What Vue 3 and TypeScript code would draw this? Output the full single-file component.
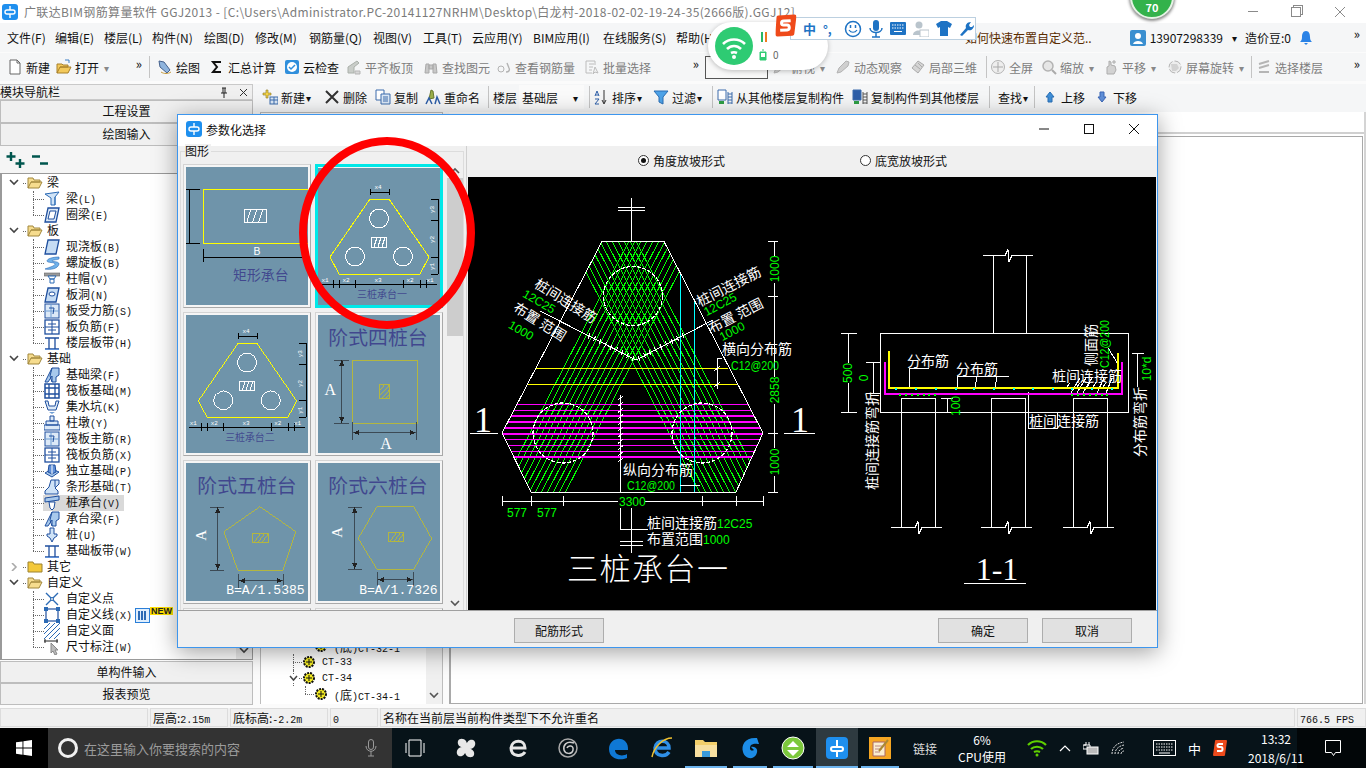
<template>
  <div class="app">
    <svg class="defs" width="0" height="0" aria-hidden="true">
      <symbol id="doc" viewBox="0 0 16 16"><path d="M3 1h7l3 3v11H3z" fill="#fff" stroke="#666" /><path d="M10 1v3h3" fill="none" stroke="#666" /></symbol>
      <symbol id="open" viewBox="0 0 16 16"><path d="M1 14V5h5l1 1h5v2H4l-3 6h11l3-6H4" fill="#f3c95b" stroke="#a8802a" /><path d="M9 1l4 0 0 3" fill="none" stroke="#3c7fc4" /></symbol>
      <symbol id="draw" viewBox="0 0 16 16"><path d="M2 2l5 1 6 8-3 3-7-6z" fill="#8fb4dd" stroke="#44608c" /><path d="M4 13c3 2 7 2 10 0" fill="none" stroke="#c59a3c" /></symbol>
      <symbol id="sigma" viewBox="0 0 16 16"><path d="M12 3H4l4 5-4 5h8" fill="none" stroke="#111" stroke-width="2" /></symbol>
      <symbol id="cloud" viewBox="0 0 16 16"><rect x="1" y="1" width="14" height="14" rx="2" fill="#2f8fdc" /><circle cx="8" cy="8" r="5" fill="#fff" /><path d="M5 8l2 2 4-4" fill="none" stroke="#2f8fdc" stroke-width="1.5" /></symbol>
      <symbol id="align" viewBox="0 0 16 16"><path d="M2 14V8l9-6 2 2-5 4v6z" fill="#c9cdc9" stroke="#aab0aa" /><path d="M9 12h5v3H9z" fill="#d8d8d8" stroke="#b5b5b5" /></symbol>
      <symbol id="binoc" viewBox="0 0 16 16"><path d="M2 14l1-9h3v9zM10 14V5h3l1 9zM6 6h4v4H6z" fill="#c8c8c8" stroke="#a9a9a9" /></symbol>
      <symbol id="eye" viewBox="0 0 16 16"><circle cx="5" cy="10" r="3" fill="none" stroke="#b3b3b3" /><path d="M10 13c3 0 4-2 3-4M11 4l2 5" fill="none" stroke="#b3b3b3" stroke-width="1.4" /></symbol>
      <symbol id="batch" viewBox="0 0 16 16"><path d="M2 2h9v4M2 2v12h6M5 5h5M5 8h4M5 11h3M11 8l3 6-3-1-2 2z" fill="none" stroke="#bcbcbc" /></symbol>
      <symbol id="orbit" viewBox="0 0 16 16"><path d="M2 14l2-5 7-7 3 1-1 4-7 6z" fill="#cfcfcf" stroke="#b3b3b3" /></symbol>
      <symbol id="box3d" viewBox="0 0 16 16"><path d="M2 9l6-7 6 4-6 8z" fill="#d5d5d5" stroke="#ababab" /><path d="M5 6l5 4M8 4l4 4" stroke="#ababab" /></symbol>
      <symbol id="fit" viewBox="0 0 16 16"><circle cx="8" cy="8" r="6.5" fill="#eee" stroke="#b3b3b3" /><path d="M8 3v10M3 8h10" stroke="#a9a9a9" /></symbol>
      <symbol id="zoom" viewBox="0 0 16 16"><circle cx="7" cy="7" r="5" fill="#e6e6e6" stroke="#b3b3b3" stroke-width="1.5" /><path d="M11 11l4 4" stroke="#aaa" stroke-width="2" /></symbol>
      <symbol id="pan" viewBox="0 0 16 16"><path d="M4 15V8l2-1V2l2 1v3l4 1 1 4-2 4z" fill="#d2d2d2" stroke="#adadad" /><path d="M11 1v4M9 3h4" stroke="#aaa" /></symbol>
      <symbol id="rotate" viewBox="0 0 16 16"><circle cx="8" cy="8" r="6" fill="#ededed" stroke="#b5b5b5" stroke-dasharray="7 2" /><path d="M4 5h6l2 4-3 3H5z" fill="#d2d2d2" /></symbol>
      <symbol id="floor" viewBox="0 0 16 16"><path d="M3 5l10-3M3 9l10-3M3 13h10" stroke="#b5b5b5" stroke-width="2" /></symbol>
      <symbol id="new" viewBox="0 0 16 16"><path d="M1 4h3V1h2v3h3v2H6v3H4V6H1z" fill="#f3d34a" stroke="#8a7520" stroke-width=".6" /><rect x="8" y="8" width="8" height="7" fill="#dce9f7" stroke="#3d6cad" /><path d="M8 11h8M12 8v7" stroke="#3d6cad" /></symbol>
      <symbol id="del" viewBox="0 0 16 16"><path d="M2 2l12 12M14 2L2 14" stroke="#333" stroke-width="2" /></symbol>
      <symbol id="copy" viewBox="0 0 16 16"><path d="M1 1h8v10H1z" fill="#fff" stroke="#3d6cad" /><path d="M6 5h9v10H6z" fill="#dce9f7" stroke="#3d6cad" /><path d="M8 8h5M8 10h5M8 12h5" stroke="#3d6cad" /></symbol>
      <symbol id="rename" viewBox="0 0 16 16"><path d="M6 1l2 1 1 7-5 1z" fill="#9bb04a" stroke="#6a7a30" /><path d="M1 15l3-6 3 6M10 15l2-7 3 7" fill="none" stroke="#2d5ea8" stroke-width="1.5" /></symbol>
      <symbol id="sort" viewBox="0 0 16 16"><path d="M11 1v13M9 11l2 4 2-4" fill="none" stroke="#333" /><path d="M2 7l2-5 2 5M2.5 6h3M2 10h4l-4 5h4" fill="none" stroke="#2d5ea8" /></symbol>
      <symbol id="filter" viewBox="0 0 16 16"><path d="M1 2h14L10 8v7l-4-2V8z" fill="#4ea3e8" stroke="#2a6fb5" /></symbol>
      <symbol id="cfrom" viewBox="0 0 16 16"><path d="M1 1h8v10H1z" fill="#fff" stroke="#3d6cad" /><path d="M2 12h5v3H2z" fill="#2e9e45" /><path d="M11 3v12M15 3v12M11 5h4M11 8h4M11 11h4M11 14h4" stroke="#3d6cad" /></symbol>
      <symbol id="cto" viewBox="0 0 16 16"><path d="M1 1h8v10H1z" fill="#2d5ea8" stroke="#3d6cad" /><path d="M2 12h5v3H2z" fill="#2e9e45" /><path d="M11 3v12M15 3v12M11 5h4M11 8h4M11 11h4M11 14h4" stroke="#555" /></symbol>
      <symbol id="up" viewBox="0 0 16 16"><path d="M8 3l4 5h-2v5H6V8H4z" fill="#3f8fd8" stroke="#2a6fb5" /></symbol>
      <symbol id="down" viewBox="0 0 16 16"><path d="M8 13l4-5h-2V3H6v5H4z" fill="#5f8fd8" stroke="#3a66b5" /></symbol>
      <symbol id="phone" viewBox="0 0 16 16"><rect width="16" height="16" rx="2" fill="#3a8fd0" /><circle cx="8" cy="6" r="3" fill="#fff" /><path d="M3 14c1-4 9-4 10 0z" fill="#fff" /></symbol>
      <symbol id="bell" viewBox="0 0 16 16"><path d="M8 1c3 0 4 3 4 6s1 4 2 5H2c1-1 2-2 2-5s1-6 4-6zM6 13h4l-2 2z" fill="#2a82e6" /></symbol>
      <symbol id="folderOpen" viewBox="0 0 16 16"><path d="M1 13V3h5l1 2h6v2H4l-3 6h11l3-6H4" fill="#f6dc8e" stroke="#a1873d" /></symbol>
      <symbol id="folderShut" viewBox="0 0 16 16"><path d="M1 13V3h5l1 2h8v8z" fill="#f3c83a" stroke="#9c8230" /></symbol>
      <symbol id="beam" viewBox="0 0 16 16"><path d="M1 3l14-2-4 5v8H7V7z" fill="#cfe3f7" stroke="#2b6ab5" /><path d="M11 6v8" stroke="#2b6ab5" /></symbol>
      <symbol id="ring" viewBox="0 0 16 16"><path d="M4 1h11l-3 14H1z" fill="#dce9f7" stroke="#1f4f9e" stroke-width="1.3" /><path d="M6 4h6l-2 8H4z" fill="#fff" stroke="#1f4f9e" /></symbol>
      <symbol id="slab" viewBox="0 0 16 16"><path d="M4 1h11l-3 14H1z" fill="#c5dcf4" stroke="#1f4f9e" stroke-width="1.3" /></symbol>
      <symbol id="spiral" viewBox="0 0 16 16"><path d="M15 2C8 2 3 4 3 6s8 1 8 3-5 3-10 5c5 1 13 0 14-5 0-3-7-2-7-3s4-1 7-2z" fill="#6fb1ea" stroke="#2b6ab5" stroke-width=".6" /></symbol>
      <symbol id="cap" viewBox="0 0 16 16"><path d="M0 2h16v3H0z" fill="#9a9a9a" stroke="#666" stroke-width=".6" /><path d="M4 5h8l-2 3H6zM6 8h4v4H6z" fill="#fff" stroke="#2b6ab5" /></symbol>
      <symbol id="hole" viewBox="0 0 16 16"><path d="M4 1h11l-3 14H1z" fill="#c5dcf4" stroke="#1f4f9e" stroke-width="1.3" /><ellipse cx="8" cy="7" rx="3" ry="2" fill="#fff" stroke="#1f4f9e" /></symbol>
      <symbol id="bar" viewBox="0 0 16 16"><rect x="1" y="1" width="14" height="14" fill="#dce9f7" stroke="#1f4f9e" /><path d="M1 8h14M7 1v14" stroke="#6f9ed4" /><path d="M5 5h5l-1 6" fill="none" stroke="#1f4f9e" /></symbol>
      <symbol id="grid" viewBox="0 0 16 16"><rect x="1" y="1" width="14" height="14" fill="#fff" stroke="#1f4f9e" stroke-width="1.3" /><path d="M1 8h14M8 1v14M4 5h8M4 11h8" stroke="#1f4f9e" /></symbol>
      <symbol id="band" viewBox="0 0 16 16"><path d="M1 3h14M1 14h14M5 3v11M11 3v11" stroke="#1f4f9e" stroke-width="1.3" /><path d="M1 14h14v1H1z" fill="#5f8fd8" /></symbol>
      <symbol id="fbeam" viewBox="0 0 16 16"><path d="M1 15l3-6 4-8h7v7l-3 2v5H8V9l-4 6z" fill="#a8c9ec" stroke="#1f4f9e" /><path d="M8 1l-2 8 2 6" fill="none" stroke="#1f4f9e" /></symbol>
      <symbol id="raft" viewBox="0 0 16 16"><rect x="1" y="1" width="14" height="14" fill="#fff" stroke="#1f4f9e" stroke-width="1.5" /><path d="M5 1v14M11 1v14M1 5h14M1 11h14" stroke="#1f4f9e" stroke-width="1.3" /></symbol>
      <symbol id="pit" viewBox="0 0 16 16"><path d="M1 2h3l1 5h6l1-5h3l-3 9H4z" fill="#dce9f7" stroke="#1f4f9e" /><path d="M5 13h6l-3 2z" fill="#6f9ed4" /></symbol>
      <symbol id="pier" viewBox="0 0 16 16"><path d="M6 1h4v5H6zM2 6h12v4H2zM0 10h16v5H0z" fill="#dce9f7" stroke="#1f4f9e" /></symbol>
      <symbol id="iso" viewBox="0 0 16 16"><path d="M1 10l7-4 7 3-7 5z" fill="#a8c9ec" stroke="#1f4f9e" /><path d="M5 2h6l1 7-4 2-4-2z" fill="#5f8fd8" stroke="#1f4f9e" /><path d="M8 2v9" stroke="#fff" /></symbol>
      <symbol id="foot" viewBox="0 0 16 16"><path d="M7 1h8v4l-4 4 3 3v3H1v-3l4-4z" fill="#cfe3f7" stroke="#1f4f9e" /><path d="M11 1v7" stroke="#1f4f9e" /></symbol>
      <symbol id="pcap" viewBox="0 0 16 16"><path d="M1 3l14-2v4L1 7z" fill="#a8c9ec" stroke="#1f4f9e" /><path d="M5 7h6l-1 6-2 2-2-2z" fill="#fff" stroke="#1f4f9e" /></symbol>
      <symbol id="pile" viewBox="0 0 16 16"><path d="M6 1h4v6h3v2l-3 2-2 4-2-4-3-2V7h3z" fill="#cfe3f7" stroke="#1f4f9e" /></symbol>
      <symbol id="point" viewBox="0 0 16 16"><path d="M2 2l12 12M14 2L2 14" stroke="#2b6ab5" stroke-width="1.4" /><circle cx="8" cy="8" r="1.5" fill="#f5f5f5" stroke="#2b6ab5" /></symbol>
      <symbol id="line" viewBox="0 0 16 16"><rect x="2" y="2" width="12" height="12" fill="#fff" stroke="#1f4f9e" stroke-width="1.2" /><path d="M0 0h4v4H0zM12 0h4v4h-4zM0 12h4v4H0zM12 12h4v4h-4z" fill="#2b6ab5" /></symbol>
      <symbol id="area" viewBox="0 0 16 16"><path d="M0 6l6-6M0 11L11 0M0 16L16 0M5 16L16 5M10 16l6-6" stroke="#2b6ab5" /></symbol>
      <symbol id="dim" viewBox="0 0 16 16"><path d="M0 2h14M1 0v4M13 0v4" stroke="#222" /><path d="M7 4l7 7-3 0 2 4-2 1-2-4-2 2z" fill="#bbb" stroke="#888" /></symbol>
      <symbol id="gear" viewBox="0 0 14 14"><circle cx="7" cy="7" r="5" fill="#f4ec22" stroke="#111" stroke-dasharray="2 1" stroke-width="2" /><path d="M4 7h6M7 4v6" stroke="#111" /></symbol>
    </svg>

    <header class="titlebar">
      <svg class="app-ico" viewBox="0 0 16 16"><rect width="16" height="16" rx="3" fill="#1e8fee" /><path d="M8 2v4H5a2 2 0 0 0 0 4h3v4M8 6h3a2 2 0 0 1 0 4H8" fill="none" stroke="#fff" stroke-width="1.4" /></svg>
      <span class="title-text">广联达BIM钢筋算量软件 GGJ2013 - [C:\Users\Administrator.PC-20141127NRHM\Desktop\白龙村-2018-02-02-19-24-35(2666版).GGJ12]</span>
      <div class="win-btns">
        <i class="min" /><i class="max" /><svg width="12" height="12" viewBox="0 0 12 12"><path d="M1 1l10 10M11 1L1 11" stroke="#8a8a8a" /></svg>
      </div>
    </header>

    <nav class="menubar">
      <span v-for="m in menu" :key="m.t" class="menu-item" :style="{ width: m.w + 'px' }">{{ m.t }}</span>
      <span class="link-text">如何快速布置自定义范..</span>
      <svg class="ico phone"><use href="#phone" /></svg>
      <span class="phone-no">13907298339</span>
      <span class="caret">▾</span>
      <span class="beans">造价豆:0</span>
      <svg class="ico bell"><use href="#bell" /></svg>
      <span class="more">»</span>
    </nav>

    <div class="toolbar top">
      <template v-for="it in topBar" :key="it.x">
        <div class="tool" :class="{ gray: it.gray }" :style="{ width: it.w + 'px' }">
          <svg v-if="it.icon" class="ico"><use :href="'#' + it.icon" /></svg>
          <span v-if="it.t" class="tool-label">{{ it.t }}</span>
          <span v-if="it.caret" class="tool-caret">▾</span>
          <span v-if="it.more" class="more">»</span>
          <span v-if="it.sep" class="sep" />
          <span v-if="it.box" class="view-box" />
        </div>
      </template>
    </div>

    <div class="workspace">
      <aside class="nav-panel">
        <div class="nav-head">
          <span>模块导航栏</span>
          <span class="head-icons">
            <svg width="10" height="11" viewBox="0 0 10 11"><path d="M3 1h4M4 1v5M6 1v5M2 6h6M5 6v5" stroke="#222" fill="none" /></svg>
            <svg width="9" height="9" viewBox="0 0 9 9"><path d="M1 1l7 7M8 1L1 8" stroke="#333" /></svg>
          </span>
        </div>
        <div class="nav-btn tall">工程设置</div>
        <div class="nav-btn tall">绘图输入</div>
        <div class="expand-bar">
          <svg width="20" height="20" viewBox="0 0 20 20"><path d="M5 2v9M0.500 6.500h9M14 9v9M9.500 13.500h9" stroke="#00564e" stroke-width="2.400" /></svg>
          <svg width="18" height="20" viewBox="0 0 18 20"><path d="M0 6.500h8M8 13.500h8" stroke="#00564e" stroke-width="2.400" /></svg>
        </div>
        <div class="tree">
          <div
            v-for="n in tree"
            :key="n.label + n.key"
            class="tree-row"
            :class="[n.icon ? 'leaf' : 'root', { end: n.end, picked: n.picked }]"
          >
            <template v-if="!n.icon">
              <svg class="chev" width="10" height="8" viewBox="0 0 10 8">
                <path :d="n.shut ? 'M3 0l4 4-4 4' : 'M1 1l4 4 4-4'" fill="none" :stroke="n.shut ? '#aaa' : '#444'" stroke-width="1.6" />
              </svg>
              <i class="dots" />
              <svg class="ico"><use :href="n.shut ? '#folderShut' : '#folderOpen'" /></svg>
            </template>
            <template v-else>
              <i class="dots long" />
              <svg class="ico"><use :href="'#' + n.icon" /></svg>
            </template>
            <span class="tree-label">{{ n.label }}<span class="mono">{{ n.key }}</span></span>
            <template v-if="n.isNew">
              <svg class="new-ico" viewBox="0 0 15 15"><rect x=".5" y=".5" width="14" height="14" fill="#dfeefd" stroke="#2b7fd8" /><path d="M4 3v9M7 3v9M10 3v9" stroke="#2b6ab5" stroke-width="2" /></svg>
              <span class="new-badge">NEW</span>
            </template>
          </div>
          <div class="tree-scroll">
            <svg width="10" height="7" viewBox="0 0 10 7"><path d="M1 1l4 4 4-4" fill="none" stroke="#444" stroke-width="1.6" /></svg>
          </div>
        </div>
        <div class="nav-btn">单构件输入</div>
        <div class="nav-btn">报表预览</div>
      </aside>

      <section class="work-right">
        <div class="toolbar second">
          <div v-for="it in secondBar" :key="it.x" class="tool" :class="{ 'combo-wrap': it.combo }" :style="{ width: it.w + 'px' }">
            <svg v-if="it.icon" class="ico"><use :href="'#' + it.icon" /></svg>
            <span v-if="it.t" class="tool-label" :class="{ combo: it.combo }">{{ it.t }}</span>
            <span v-if="it.caret" class="tool-caret dark">▾</span>
            <span v-if="it.sep" class="sep" />
          </div>
        </div>
        <div class="work-body">
          <div class="list-pane">
            <div v-for="r in listRows" :key="r.t" class="list-row" :class="{ child: r.child }">
              <svg v-if="r.chev" class="list-chev" width="9" height="7" viewBox="0 0 9 7"><path d="M1 1l3.500 4 3.500-4" fill="none" stroke="#444" stroke-width="1.5" /></svg>
              <i class="dots" />
              <svg class="gear"><use href="#gear" /></svg>
              <span class="mono-name"><template v-if="r.child">(<span class="cn">底</span>)</template>{{ r.t }}</span>
            </div>
            <div class="list-scroll">
              <svg width="10" height="7" viewBox="0 0 10 7"><path d="M1 1l4 4 4-4" fill="none" stroke="#555" stroke-width="1.6" /></svg>
            </div>
          </div>
          <div class="props-pane">
            <div class="props-head" />
            <div class="canvas-frame" />
          </div>
        </div>
      </section>
    </div>

    <footer class="statusbar">
      <span class="cell c0" />
      <span class="cell c1">层高:<b>2.15m</b></span>
      <span class="cell c2">底标高:<b>-2.2m</b></span>
      <span class="cell c3"><b>0</b></span>
      <span class="cell c4">名称在当前层当前构件类型下不允许重名</span>
      <span class="cell c5"><b>766.5 FPS</b></span>
    </footer>

    <footer class="taskbar">
      <div class="start">
        <svg width="16" height="16" viewBox="0 0 16 16"><path d="M0 2.300l6.500-.9v6.200H0zM7.400 1.300L16 0v7.600H7.400zM0 8.500h6.500v6.200L0 13.800zM7.400 8.500H16V16l-8.600-1.200z" fill="#fff" /></svg>
      </div>
      <div class="search">
        <i class="cortana" />
        <span>在这里输入你要搜索的内容</span>
        <svg class="mic" width="12" height="18" viewBox="0 0 12 18"><rect x="3.500" y=".5" width="5" height="10" rx="2.500" fill="none" stroke="#9a9a9a" /><path d="M1 7c0 7 10 7 10 0M6 12v5M3 17h6" fill="none" stroke="#9a9a9a" /></svg>
      </div>
      <div class="task-icons">
        <div v-for="b in taskButtons" :key="b.id" class="task-btn" :class="{ active: b.active, running: b.running }" :style="{ width: b.w + 'px' }">
          <svg width="26" height="26" viewBox="0 0 26 26" v-html="b.svg" />
        </div>
      </div>
      <span class="tray-link">链接</span>
      <div class="cpu"><span>6%</span><span>CPU使用</span></div>
      <div class="tray">
        <svg width="20" height="18" viewBox="0 0 20 18"><path d="M1 6c5-5 13-5 18 0M4 10c3-3 9-3 12 0M7 13c2-1 4-1 6 0" fill="none" stroke="#5fd000" stroke-width="2.200" /><circle cx="10" cy="16" r="1.500" fill="#5fd000" /></svg>
        <svg width="12" height="8" viewBox="0 0 12 8"><path d="M1 7l5-5 5 5" fill="none" stroke="#fff" stroke-width="1.200" /></svg>
        <svg width="16" height="14" viewBox="0 0 16 14"><path d="M1 4h2V1M6 4V1M0 4h7v4H0z" fill="none" stroke="#fff" /><rect x="4" y="6" width="11" height="7" fill="#bbb" stroke="#fff" /></svg>
        <svg width="14" height="14" viewBox="0 0 14 14"><path d="M1 13C1 6 6 2 13 1M4 13c0-5 4-8 9-9M7 13c0-3 2-5 6-6M10 13c0-1 1-3 3-3" fill="none" stroke="#ddd" stroke-dasharray="2 1" /></svg>
        <svg class="kbd" width="23" height="16" viewBox="0 0 23 16"><rect x=".5" y=".5" width="22" height="15" fill="none" stroke="#fff" /><path d="M3 4h17M3 7h17M3 10h17" stroke="#fff" stroke-dasharray="1.500 1" /><path d="M6 13h11" stroke="#fff" /></svg>
        <span class="tray-ime">中</span>
        <svg width="14" height="18" viewBox="0 0 14 18"><path d="M3 1h10q1 0 1 1l-2 14q0 1-1 1H1q-1 0-1-1L2 2q0-1 1-1z" fill="#ee4b1c" /><path d="M10 5H6C4 5 4 8 6 8h2c2 0 2 4 0 4H4" fill="none" stroke="#fff" stroke-width="2" /></svg>
      </div>
      <div class="clock"><span>13:32</span><span>2018/6/11</span></div>
      <div class="notify">
        <svg width="16" height="17" viewBox="0 0 16 17"><path d="M.5.5h15v12h-5l-2 3-2-3H.5z" fill="none" stroke="#fff" /></svg>
      </div>
    </footer>

    <!-- dialog floats above the main window -->
    <div class="dialog">
      <div class="dlg-title">
        <svg class="app-ico" viewBox="0 0 16 16"><rect width="16" height="16" rx="3" fill="#1e8fee" /><path d="M8 2v4H5a2 2 0 0 0 0 4h3v4M8 6h3a2 2 0 0 1 0 4H8" fill="none" stroke="#fff" stroke-width="1.400" /></svg>
        <span class="dlg-name">参数化选择</span>
        <div class="dlg-controls">
          <svg width="12" height="12" viewBox="0 0 12 12"><path d="M1 6h10" stroke="#111" /></svg>
          <svg width="12" height="12" viewBox="0 0 12 12"><rect x="1.500" y="1.500" width="9" height="9" fill="none" stroke="#111" /></svg>
          <svg width="12" height="12" viewBox="0 0 12 12"><path d="M1 1l10 10M11 1L1 11" stroke="#111" /></svg>
        </div>
      </div>
      <div class="dlg-body">
        <div class="shapes">
          <span class="shapes-legend">图形</span>
          <div class="thumb-grid">
            <div class="cell-thumb">
              <svg viewBox="186 167 122 139" class="thumb">
                <rect x="186" y="167" width="122" height="139" fill="#6f94aa" />
                <path d="M308 189.500H203.500v55H308" fill="none" stroke="#ffff00" />
                <path d="M186 189.500h14M186 244.500h14M189.500 189v55M203.500 250v13M203 258.500h105" fill="none" stroke="#000" />
                <rect x="244.500" y="209.500" width="22" height="13" fill="none" stroke="#fff" />
                <path d="M247 222l4-13M253 222l4-13M259 222l4-13" stroke="#fff" />
                <text x="257" y="256" class="t-white t-11" text-anchor="middle">B</text>
                <text x="233" y="281" class="t-navy t-14">矩形承台</text>
              </svg>
            </div>
            <div class="cell-thumb selected">
              <svg viewBox="318 168 122 137" class="thumb">
                <rect x="318" y="168" width="122" height="137" fill="#6f94aa" />
                <g v-html="pileThree" />
                <text x="357" y="298" class="t-navy t-10">三桩承台一</text>
              </svg>
            </div>
            <div class="cell-thumb">
              <svg viewBox="318 171 122 139" class="thumb">
                <rect x="318" y="171" width="122" height="139" fill="#6f94aa" />
                <g v-html="pileThree" />
                <text x="357" y="298" class="t-navy t-10">三桩承台二</text>
              </svg>
            </div>
            <div class="cell-thumb">
              <svg viewBox="318 315 122 139" class="thumb">
                <rect x="318" y="315" width="122" height="139" fill="#6f94aa" />
                <text x="328" y="345" class="t-navy t-20">阶式四桩台</text>
                <rect x="352.500" y="360.500" width="65" height="64" fill="none" stroke="#b3b63f" />
                <rect x="379.500" y="385.500" width="10" height="14" fill="none" stroke="#b3b63f" />
                <path d="M380 391l4-5M380 396l9-10M382 399l7-8M386 399l3-3" stroke="#b3b63f" />
                <path d="M334 360.500h15M334 424.500h15M341.500 360v64M352.500 423v18M416.500 423v18M353 433.500h63" fill="none" stroke="#3b4a55" />
                <path d="M341.500 360l-2.500 6h5zM341.500 424l-2.500-6h5zM353 433.500l6-2.500v5zM416 433.500l-6-2.500v5z" fill="#222" />
                <text x="330" y="396" class="t-white t-16 serif" text-anchor="middle">A</text>
                <text x="386" y="450" class="t-white t-16 serif" text-anchor="middle">A</text>
              </svg>
            </div>
            <div class="cell-thumb">
              <svg viewBox="186 463 122 139" class="thumb">
                <rect x="186" y="463" width="122" height="139" fill="#6f94aa" />
                <text x="197" y="493" class="t-navy t-20">阶式五桩台</text>
                <path d="M260 507l36 25-13 39h-45l-14-39z" fill="none" stroke="#b3b63f" />
                <rect x="252.500" y="534.500" width="16" height="9" fill="none" stroke="#b3b63f" />
                <path d="M254 543l6-8M258 543l6-8M262 543l6-8" stroke="#b3b63f" />
                <path d="M210 507.500h14M210 571.500h14M217.500 507v64M238.500 575v14M283.500 575v14M239 581.500h44" fill="none" stroke="#3b4a55" />
                <path d="M217.500 507l-2.500 6h5zM217.500 571l-2.500-6h5zM239 581.500l6-2.500v5zM283 581.500l-6-2.500v5z" fill="#222" />
                <text transform="translate(206 536) rotate(-90)" class="t-white t-15 serif" text-anchor="middle">A</text>
                <text x="226" y="595" class="t-white t-13 mono-font">B=A/1.5385</text>
              </svg>
            </div>
            <div class="cell-thumb">
              <svg viewBox="318 463 122 139" class="thumb">
                <rect x="318" y="463" width="122" height="139" fill="#6f94aa" />
                <text x="328" y="493" class="t-navy t-20">阶式六桩台</text>
                <path d="M377 507h37l18 32-18 31h-37l-19-31z" fill="none" stroke="#b3b63f" />
                <rect x="388.500" y="533.500" width="15" height="9" fill="none" stroke="#b3b63f" />
                <path d="M390 542l6-8M394 542l6-8M398 542l5-7" stroke="#b3b63f" />
                <path d="M348 507.500h14M348 570.500h14M354.500 507v63M377.500 573v14M413.500 573v14M378 580.500h35" fill="none" stroke="#3b4a55" />
                <path d="M354.500 507l-2.500 6h5zM354.500 570l-2.500-6h5zM378 580.500l6-2.500v5zM413 580.500l-6-2.500v5z" fill="#222" />
                <text transform="translate(342 533) rotate(-90)" class="t-white t-15 serif" text-anchor="middle">A</text>
                <text x="359" y="595" class="t-white t-13 mono-font">B=A/1.7326</text>
              </svg>
            </div>
            <div class="cell-thumb" />
            <div class="cell-thumb" />
          </div>
          <div class="vscroll">
            <svg width="10" height="7" viewBox="0 0 10 7"><path d="M1 6l4-4 4 4" fill="none" stroke="#555" stroke-width="1.600" /></svg>
            <i class="vthumb" />
            <svg class="vdown" width="10" height="7" viewBox="0 0 10 7"><path d="M1 1l4 4 4-4" fill="none" stroke="#555" stroke-width="1.600" /></svg>
          </div>
        </div>
        <div class="preview">
          <div class="radios">
            <label class="radio on">角度放坡形式</label>
            <label class="radio">底宽放坡形式</label>
          </div>
          <svg class="cad" viewBox="468 177 688 433">
            <rect x="468" y="177" width="688" height="433" fill="#000" />
            <clipPath id="hexClip"><path d="M602 241h62l99 192-27 59H531l-29-59z" /></clipPath>

            <!-- plan: rebar bands -->
            <g clip-path="url(#hexClip)" stroke="#00ff00" stroke-width="1">
              <line v-for="x in bandXs" :key="'a' + x" :x1="x" y1="241" :x2="x + 129.500" y2="492" />
              <line v-for="x in bandXs" :key="'b' + x" :x1="1265 - x" y1="241" :x2="1265 - x - 129.500" y2="492" />
            </g>
            <g clip-path="url(#hexClip)" stroke="#ff00ff" stroke-width="1.500">
              <line v-for="y in magentaYs" :key="y" x1="500" :y1="y" x2="766" :y2="y" />
            </g>
            <path d="M536 368.500h192M528 384.500h209" stroke="#ffff00" stroke-width="1.500" />
            <path d="M680.500 275v217M694.500 302v190" stroke="#00ffff" stroke-width="1.200" />
            <g fill="none" stroke="#fff">
              <path d="M602 241.500h62l99 191.500-27 59H531l-29-59z" />
              <circle cx="633" cy="296" r="29.500" stroke-dasharray="4 1.500" stroke-width="1.200" />
              <circle cx="563" cy="433" r="30" stroke-dasharray="4 1.500" stroke-width="1.200" />
              <circle cx="702" cy="433" r="30" stroke-dasharray="4 1.500" stroke-width="1.200" />
              <path d="M631.500 198v43M618 207.500h27M618 210.500h27" />
              <path d="M540 311l96 49 77-40" />
              <path v-for="t in vTicks" :key="t" :d="t" />
              <path d="M620.500 395v97" />
              <path v-for="y in vertTicks" :key="y" :d="`M618 ${y + 2}l5-4`" />
              <path d="M722 358.500h-5v30M714 371l6-5M714 387l6-5" />
              <path d="M680 485.500h20M620.500 508v21h27M631.500 508v45M620 541.500h23M620 545.500h23" />
              <!-- dimensions, the line stops around each number -->
              <path d="M774.500 241v15M774.500 283v94M774.500 404v44M774.500 476v16M768 241.500h10M768 296.500h10M768 433.500h10M768 492.500h10" />
              <path d="M502 501.500h116M645 501.500h118M502.500 496v10M531.500 496v10M563.500 496v10M702.500 496v10M736.500 496v10M763.500 496v10" />
              <path d="M470 433.500h28M784 433.500h31" />
            </g>
            <g class="cad-green">
              <text transform="translate(779 269) rotate(-90)" text-anchor="middle">1000</text>
              <text transform="translate(779 390) rotate(-90)" text-anchor="middle">2858</text>
              <text transform="translate(779 462) rotate(-90)" text-anchor="middle">1000</text>
              <text x="507" y="517">577</text>
              <text x="537" y="517">577</text>
              <text x="619" y="506">3300</text>
              <text x="731" y="370" class="wide" textLength="48" lengthAdjust="spacingAndGlyphs">C12@200</text>
              <text x="627" y="490" class="wide" textLength="48" lengthAdjust="spacingAndGlyphs">C12@200</text>
              <text x="717" y="528">12C25</text>
              <text x="703" y="544">1000</text>
              <text transform="translate(537 305) rotate(30)" text-anchor="middle">12C25</text>
              <text transform="translate(519 334) rotate(30)" text-anchor="middle">1000</text>
              <text transform="translate(722 308) rotate(-28)" text-anchor="middle">12C25</text>
              <text transform="translate(734 335) rotate(-28)" text-anchor="middle">1000</text>
            </g>
            <g class="cad-white">
              <text transform="translate(563 305) rotate(32)" text-anchor="middle">桩间连接筋</text>
              <text transform="translate(537 326) rotate(32)" text-anchor="middle">布置 范围</text>
              <text transform="translate(731 291) rotate(-27)" text-anchor="middle">桩间连接筋</text>
              <text transform="translate(738 320) rotate(-27)" text-anchor="middle">布置 范围</text>
              <text x="722" y="354">横向分布筋</text>
              <text x="623" y="475">纵向分布筋</text>
              <text x="647" y="528">桩间连接筋</text>
              <text x="647" y="544">布置范围</text>
            </g>
            <text x="483" y="432" class="cad-big serif" text-anchor="middle">1</text>
            <text x="800" y="432" class="cad-big serif" text-anchor="middle">1</text>
            <text x="567" y="580" class="cad-title">三桩承台一</text>

            <!-- section 1-1 -->
            <g fill="none" stroke="#fff">
              <path d="M993.500 255v78M1026.500 255v78M983 255.500h22l3-6 1 12 3-6h21" />
              <rect x="880.500" y="333.500" width="248" height="79" />
              <path d="M901.500 398v129M935.500 398v129M901 398.500h34M991.500 398v129M1025.500 398v129M991 398.500h34M1073.500 398v129M1107.500 398v129M1073 398.500h34" />
              <path d="M891 527.500h24l3-6 1 12 3-6h20M981 527.500h24l3-6 1 12 3-6h20M1063 527.500h24l3-6 1 12 3-6h20" />
              <path d="M848.500 333v30M848.500 383v30M841 333.500h16M841 412.500h16M873.500 362v32M866 362.500h14M866 393.500h14" />
              <path d="M947.500 398v15M941 398.500h12M941 412.500h12M1137.500 353v34M1132 353.500h12" />
              <path d="M909.500 388v-20h19M958 376.500h51M958 376l-1 12M977 376l-2 12M997 376l-2 12" />
              <path d="M1028.500 392v36h29v-15M1090 383l-4 5M1080 383l-4 5M1070 383l-4 5M1106 383l-4 5M1096 383l-4 5M1080 378l-9 15M1086 378l-9 15M1092 378l-9 15M1104 378l-7 15M1112 378l-6 15" />
              <path d="M1108 348l10 16" />
            </g>
            <path d="M889 351v37h229v-35" fill="none" stroke="#ffff00" stroke-width="2" />
            <path d="M885 362v32h237v-32" fill="none" stroke="#ff00ff" stroke-width="2" />
            <circle v-for="x in cyanDots" :key="x" :cx="x" cy="389" r="1.300" fill="#00ffff" />
            <circle v-for="x in greenDots" :key="x" :cx="x" cy="395" r="1.300" fill="#00ff00" />
            <g class="cad-green">
              <text transform="translate(852 373) rotate(-90)" text-anchor="middle">500</text>
              <text transform="translate(868 378) rotate(-90)" text-anchor="middle">0</text>
              <text transform="translate(960 406) rotate(-90)" text-anchor="middle">100</text>
              <text transform="translate(1151 369) rotate(-90)" text-anchor="middle">10*d</text>
              <text transform="translate(1109 344) rotate(-90)" class="wide" text-anchor="middle" textLength="48" lengthAdjust="spacingAndGlyphs">C12@200</text>
            </g>
            <g class="cad-white">
              <text x="907" y="366">分布筋</text>
              <text x="956" y="374">分布筋</text>
              <text x="1052" y="381">桩间连接筋</text>
              <text x="1029" y="426">桩间连接筋</text>
              <text transform="translate(877 441) rotate(-90)" text-anchor="middle">桩间连接筋弯折</text>
              <text transform="translate(1145 422) rotate(-90)" text-anchor="middle">分布筋弯折</text>
              <text transform="translate(1096 345) rotate(-90)" text-anchor="middle">侧面筋</text>
            </g>
            <text x="997" y="580" class="cad-big serif small" text-anchor="middle">1-1</text>
            <path d="M964 583.500h62" stroke="#fff" />
          </svg>
        </div>
      </div>
      <div class="dlg-foot">
        <button class="btn rebar">配筋形式</button>
        <button class="btn ok">确定</button>
        <button class="btn cancel">取消</button>
      </div>
    </div>

    <!-- red marker drawn by the user over the screenshot -->
    <svg class="marker" width="190" height="206" viewBox="0 0 190 206">
      <ellipse cx="95" cy="103" rx="84" ry="92" fill="none" stroke="#ff0000" stroke-width="8" />
    </svg>

    <div class="score"><span>70</span></div>

    <div class="net-widget">
      <svg width="38" height="38" viewBox="0 0 38 38"><circle cx="19" cy="19" r="19" fill="#2ecb73" /><path d="M8 17c6-6 16-6 22 0M12 22c4-4 10-4 14 0M16 26c2-1 4-1 6 0" fill="none" stroke="#fff" stroke-width="2.600" /><circle cx="19" cy="30" r="2" fill="#fff" /></svg>
      <div class="net-side">
        <svg width="10" height="12" viewBox="0 0 10 12"><path d="M3 1v10" stroke="#29b765" stroke-width="2" /><path d="M7 1v10" stroke="#f07a1e" stroke-width="2" /></svg>
        <div class="net-count">
          <svg width="8" height="12" viewBox="0 0 8 12"><path d="M1 3h6v8H1z" fill="#2ecb73" stroke="#2ecb73" /><path d="M3 1h2" stroke="#2ecb73" /><rect x="2" y="4" width="4" height="4" fill="#fff" /></svg>
          <span>0</span>
        </div>
      </div>
    </div>

    <div class="ime-bar">
      <span class="ime-zh">中</span>
      <span class="ime-dot">°,</span>
      <svg width="18" height="18" viewBox="0 0 18 18"><circle cx="9" cy="9" r="7.500" fill="none" stroke="#1e73c4" stroke-width="1.500" /><path d="M5 10c2 3 6 3 8 0" fill="none" stroke="#1e73c4" stroke-width="1.200" /><path d="M6.500 5v3M11.500 5v3" stroke="#1e73c4" stroke-width="1.500" /></svg>
      <svg width="14" height="18" viewBox="0 0 14 18"><rect x="4" y="0" width="6" height="11" rx="3" fill="#1e73c4" /><path d="M1 8c0 6 12 6 12 0M7 13v4M3 17h8" fill="none" stroke="#1e73c4" stroke-width="1.500" /></svg>
      <svg width="16" height="13" viewBox="0 0 16 13"><rect width="16" height="13" rx="1" fill="#1e73c4" /><path d="M2 3h12M2 6h12" stroke="#fff" stroke-dasharray="1.500 1" /><path d="M4 9.500h8" stroke="#fff" /></svg>
      <svg width="16" height="16" viewBox="0 0 16 16"><circle cx="6" cy="4" r="3.500" fill="#b9c4cc" /><path d="M0 14c0-6 11-6 11 0z" fill="#b9c4cc" /><rect x="7" y="9" width="9" height="7" fill="#fff" stroke="#b9c4cc" /></svg>
      <svg width="16" height="15" viewBox="0 0 16 15"><path d="M5 0h6l5 3-2 4-2-1v9H4V6L2 7 0 3z" fill="#1e73c4" /></svg>
      <svg width="15" height="15" viewBox="0 0 15 15"><path d="M1 14l6-7c-1-3 1-6 5-6l-2 3 1 2 2 0 2-2c0 4-3 6-6 5l-6 6z" fill="#1e73c4" /></svg>
    </div>
    <div class="sogou">
      <svg width="22" height="23" viewBox="0 0 22 23"><path d="M4 1h16q2 0 2 2l-3 17q0 2-2 2H2q-2 0-2-2L2 3q0-2 2-2z" fill="#ef4a1a" /><path d="M16 7H9c-3 0-3 4 0 4h3c3 0 3 5 0 5H5" fill="none" stroke="#fff" stroke-width="3" /></svg>
    </div>
  </div>
</template>

<script setup lang="ts">
interface BarItem {
  x: number
  w?: number
  icon?: string
  t?: string
  gray?: boolean
  caret?: boolean
  more?: boolean
  sep?: boolean
  box?: boolean
  combo?: boolean
}

// widths follow from where the next item begins
function withWidths(items: BarItem[], end: number): BarItem[] {
  return items.map((it, i) => ({ ...it, w: (items[i + 1]?.x ?? end) - it.x }))
}

const menuNames: [string, number][] = [
  ['文件(F)', 48], ['编辑(E)', 49], ['楼层(L)', 48], ['构件(N)', 52], ['绘图(D)', 51], ['修改(M)', 54],
  ['钢筋量(Q)', 64], ['视图(V)', 50], ['工具(T)', 49], ['云应用(Y)', 61], ['BIM应用(I)', 70], ['在线服务(S)', 73], ['帮助(H)', 44],
]
const menu = menuNames.map(([t, w]) => ({ t, w }))

const topBar = withWidths([
  { x: 7, icon: 'doc', t: '新建' },
  { x: 56, icon: 'open', t: '打开', caret: true },
  { x: 135, more: true },
  { x: 148, sep: true },
  { x: 157, icon: 'draw', t: '绘图' },
  { x: 209, icon: 'sigma', t: '汇总计算' },
  { x: 284, icon: 'cloud', t: '云检查' },
  { x: 346, icon: 'align', t: '平齐板顶', gray: true },
  { x: 423, icon: 'binoc', t: '查找图元', gray: true },
  { x: 496, icon: 'eye', t: '查看钢筋量', gray: true },
  { x: 584, icon: 'batch', t: '批量选择', gray: true },
  { x: 670, more: true },
  { x: 705, box: true },
  { x: 772, icon: 'orbit', t: '俯视', gray: true, caret: true },
  { x: 835, icon: 'orbit', t: '动态观察', gray: true },
  { x: 910, icon: 'box3d', t: '局部三维', gray: true },
  { x: 985, sep: true },
  { x: 990, icon: 'fit', t: '全屏', gray: true },
  { x: 1041, icon: 'zoom', t: '缩放', gray: true, caret: true },
  { x: 1103, icon: 'pan', t: '平移', gray: true, caret: true },
  { x: 1167, icon: 'rotate', t: '屏幕旋转', gray: true, caret: true },
  { x: 1250, sep: true },
  { x: 1256, icon: 'floor', t: '选择楼层', gray: true },
  { x: 1350, more: true },
], 1366)

const secondBar = withWidths([
  { x: 262, icon: 'new', t: '新建', caret: true },
  { x: 324, icon: 'del', t: '删除' },
  { x: 375, icon: 'copy', t: '复制' },
  { x: 425, icon: 'rename', t: '重命名' },
  { x: 487, sep: true },
  { x: 490, t: '楼层' },
  { x: 519, t: '基础层', combo: true, caret: true },
  { x: 588, sep: true },
  { x: 593, icon: 'sort', t: '排序', caret: true },
  { x: 653, icon: 'filter', t: '过滤', caret: true },
  { x: 711, sep: true },
  { x: 717, icon: 'cfrom', t: '从其他楼层复制构件' },
  { x: 852, icon: 'cto', t: '复制构件到其他楼层' },
  { x: 988, sep: true },
  { x: 995, t: '查找', caret: true },
  { x: 1033, sep: true },
  { x: 1042, icon: 'up', t: '上移' },
  { x: 1094, icon: 'down', t: '下移' },
], 1366)

interface TreeNode {
  label: string
  key?: string
  icon?: string
  shut?: boolean
  end?: boolean
  picked?: boolean
  isNew?: boolean
}

const tree: TreeNode[] = [
  { label: '梁' },
  { label: '梁', key: '(L)', icon: 'beam' },
  { label: '圈梁', key: '(E)', icon: 'ring', end: true },
  { label: '板' },
  { label: '现浇板', key: '(B)', icon: 'slab' },
  { label: '螺旋板', key: '(B)', icon: 'spiral' },
  { label: '柱帽', key: '(V)', icon: 'cap' },
  { label: '板洞', key: '(N)', icon: 'hole' },
  { label: '板受力筋', key: '(S)', icon: 'bar' },
  { label: '板负筋', key: '(F)', icon: 'grid' },
  { label: '楼层板带', key: '(H)', icon: 'band', end: true },
  { label: '基础' },
  { label: '基础梁', key: '(F)', icon: 'fbeam' },
  { label: '筏板基础', key: '(M)', icon: 'raft' },
  { label: '集水坑', key: '(K)', icon: 'pit' },
  { label: '柱墩', key: '(Y)', icon: 'pier' },
  { label: '筏板主筋', key: '(R)', icon: 'bar' },
  { label: '筏板负筋', key: '(X)', icon: 'grid' },
  { label: '独立基础', key: '(P)', icon: 'iso' },
  { label: '条形基础', key: '(T)', icon: 'foot' },
  { label: '桩承台', key: '(V)', icon: 'pcap', picked: true },
  { label: '承台梁', key: '(F)', icon: 'fbeam' },
  { label: '桩', key: '(U)', icon: 'pile' },
  { label: '基础板带', key: '(W)', icon: 'band', end: true },
  { label: '其它', shut: true },
  { label: '自定义' },
  { label: '自定义点', icon: 'point' },
  { label: '自定义线', key: '(X)', icon: 'line', isNew: true },
  { label: '自定义面', icon: 'area' },
  { label: '尺寸标注', key: '(W)', icon: 'dim', end: true },
]

const listRows = [
  { t: 'CT-32-1', child: true },
  { t: 'CT-33' },
  { t: 'CT-34', chev: true },
  { t: 'CT-34-1', child: true },
]

const bandXs = Array.from({ length: 12 }, (_, i) => 570 + i * 6)
const magentaYs = Array.from({ length: 10 }, (_, i) => 404.5 + i * 5.85)
const vertTicks = Array.from({ length: 11 }, (_, i) => 398 + i * 6.2)
const cyanDots = [896, 916, 936, 956, 974, 994, 1014, 1033, 1053, 1072, 1092, 1112]
const greenDots = [900, 906, 912, 918, 924, 929, 935, 1072, 1078, 1084, 1090, 1096, 1102, 1107]

// small cross ticks along the V shaped rebar line
const vTicks = [
  ...Array.from({ length: 9 }, (_, i) => {
    const x = 588 + i * 5.5
    const y = 335.5 + i * 2.8
    return `M${x} ${y + 3}l2-5`
  }),
  ...Array.from({ length: 9 }, (_, i) => {
    const x = 640 + i * 5.5
    const y = 358 - i * 2.9
    return `M${x} ${y + 3}l-2-5`
  }),
]

// same drawing is used by the two three-pile thumbnails
const pileThree = `
  <path d="M370 199.500h19l40 58-9 17h-81l-9-17z" fill="none" stroke="#ffff00" />
  <g fill="none" stroke="#fff">
    <circle cx="379" cy="219" r="9.500" /><circle cx="355" cy="257" r="9.500" /><circle cx="403" cy="257" r="9.500" />
    <rect x="371.500" y="237.500" width="15" height="10" />
    <path d="M374 247l3-9M378 247l3-9M382 247l3-9" />
  </g>
  <path d="M370 192.500h19M370.500 189v6M389.500 189v6M431 199.500h7M431 220.500h7M431 257.500h7M431 274.500h7M438.500 199v75M321 284.500h116M333.500 280v8M339.500 280v8M355.500 280v8M403.500 280v8M420.500 280v8M426.500 280v8" fill="none" stroke="#000" />
  <g fill="#fff" font-family="Liberation Mono, monospace" font-size="6" text-anchor="middle">
    <text x="378" y="189">x4</text><text x="325" y="282">x1</text><text x="346" y="282">x2</text><text x="378" y="282">x3</text><text x="410" y="282">x2</text><text x="430" y="282">x1</text>
    <text transform="translate(434 210) rotate(-90)">y3</text><text transform="translate(434 240) rotate(-90)">y2</text><text transform="translate(434 267) rotate(-90)">y1</text>
  </g>`

const task = (id: string, w: number, svg: string, extra: { active?: boolean; running?: boolean } = {}) => ({ id, w, svg, ...extra })

const taskButtons = [
  task('view', 46, '<path d="M7 5h12v16H7zM4 8v10M22 8v10" fill="none" stroke="#fff" />'),
  task('fan', 56, '<path d="M13 13C6 13 4 9 5 6s6-3 8 0 0 7 0 7zm0 0c0-7 4-9 7-8s3 6 0 8-7 0-7 0zm0 0c7 0 9 4 8 7s-6 3-8 0 0-7 0-7zm0 0c0 7-4 9-7 8s-3-6 0-8 7 0 7 0z" fill="#e8e8e8" />'),
  task('ie1', 48, '<path d="M6 13h14c0-9-13-9-14 0 0 9 11 9 14 4" fill="none" stroke="#e6e6e6" stroke-width="3" />'),
  task('swirl', 52, '<circle cx="13" cy="13" r="9" fill="none" stroke="#aaa" stroke-width="1.500" /><path d="M19 8c-8-3-11 3-10 7s8 5 9 0-5-5-6-2" fill="none" stroke="#ccc" stroke-width="1.500" />'),
  task('edge', 48, '<path d="M4 14C4 5 14 1 20 6c3 3 3 6 3 9H10c0 5 7 7 12 4v4c-7 3-18 1-18-9z" fill="#0f78d4" />'),
  task('ie2', 40, '<path d="M6 13h14c0-9-13-9-14 0 0 9 11 9 14 4" fill="none" stroke="#2f8fe6" stroke-width="3.500" /><path d="M3 22C5 12 14 3 23 3" fill="none" stroke="#f1c232" stroke-width="1.500" />'),
  task('folder', 48, '<path d="M2 5h8l2 2h12v15H2z" fill="#f3cf6b" /><path d="M2 10h22v12H2z" fill="#f8e0a0" /><path d="M9 16h8v6H9z" fill="#3a9ad9" />', { running: true }),
  task('glodon', 40, '<path d="M20 3C8 2 4 10 6 17s10 8 13 3 0-9-5-8l3 3c-4 2-5-2-3-5 3-2 7-1 8-1z" fill="#1c8ce6" />', { running: true }),
  task('ball', 46, '<circle cx="13" cy="13" r="11" fill="#7cc83c" stroke="#fff" /><path d="M7 12h12l-6-6zM7 15h12l-6 6z" fill="#fff" />', { running: true }),
  task('glodonApp', 42, '<rect x="2" y="2" width="22" height="22" rx="4" fill="#1e8fee" /><path d="M13 5v7H9a2 2 0 0 0 0 4h4v6M13 12h4a2 2 0 0 1 0 4h-4" fill="none" stroke="#fff" stroke-width="2" />', { active: true, running: true }),
  task('note', 44, '<rect x="2" y="2" width="22" height="22" fill="#f5a623" /><path d="M6 7h12v14H6z" fill="#fbeed0" stroke="#a66" /><path d="M8 11h7M8 14h7M8 17h5" stroke="#b88" /><path d="M12 16l9-11" stroke="#a83" stroke-width="2" />', { running: true }),
]
</script>

<style>
html,
body {
  margin: 0;
  overflow: hidden;
}
</style>

<style scoped>
.app {
  position: relative;
  width: 1366px;
  height: 768px;
  overflow: hidden;
  display: flex;
  flex-direction: column;
  background: #fbfbfb;
  font-family: "Noto Sans CJK SC", "Liberation Sans", sans-serif;
  font-size: 12px;
  color: #111;
}

.defs {
  position: absolute;
}

.ico {
  width: 16px;
  height: 16px;
  flex: none;
}

.titlebar {
  height: 23px;
  display: flex;
  align-items: center;
  padding-left: 2px;
  background: #fff;
  flex: none;
}

.app-ico {
  width: 16px;
  height: 16px;
  flex: none;
}

.title-text {
  margin-left: 6px;
  font-size: 12px;
  letter-spacing: 0.36px;
  color: #7b7b7b;
  white-space: nowrap;
}

.win-btns {
  margin-left: auto;
  display: flex;
  align-items: center;
  gap: 33px;
  padding-right: 20px;
}

.win-btns .min {
  width: 10px;
  border-top: 1px solid #8a8a8a;
}

.win-btns .max {
  width: 8px;
  height: 8px;
  border: 1px solid #8a8a8a;
  box-shadow: 2px -2px 0 -1px #fff, 2px -2px 0 0 #8a8a8a;
}

.menubar {
  height: 29px;
  display: flex;
  align-items: center;
  padding-left: 7px;
  background: #f5f6f7;
  flex: none;
}

.menu-item {
  flex: none;
  white-space: nowrap;
}

.link-text {
  margin-left: 245px;
  color: #5a2d00;
  white-space: nowrap;
}

.phone {
  margin-left: 38px;
}

.phone-no {
  margin-left: 4px;
}

.caret {
  margin-left: 9px;
  font-size: 10px;
}

.beans {
  margin-left: 8px;
}

.bell {
  margin-left: 7px;
}

.more {
  margin-left: auto;
  padding-right: 6px;
  font-size: 13px;
  line-height: 1;
  transform: translateY(-4px);
}

.toolbar {
  display: flex;
  align-items: center;
  background: #f5f6f7;
  flex: none;
}

.toolbar.top {
  height: 28px;
  margin-top: 1px;
  padding-left: 7px;
}

.toolbar.second {
  height: 28px;
  box-sizing: border-box;
  padding-left: 9px;
  padding-bottom: 2px;
}

.tool {
  display: flex;
  align-items: center;
  flex: none;
  white-space: nowrap;
}

.tool.gray .tool-label {
  color: #7d7d7d;
}

.tool-label {
  margin-left: 3px;
}

.combo-wrap {
  height: 24px;
  background: #fafafa;
  box-sizing: border-box;
  border-right: 4px solid #f5f6f7;
}

.tool-label.combo {
  margin-left: 3px;
  width: 50px;
}

.tool-caret {
  margin-left: 5px;
  font-size: 10px;
  color: #888;
}

.tool-caret.dark {
  margin-left: 1px;
  color: #111;
}

.sep {
  width: 1px;
  height: 22px;
  background: #c4c4c4;
  margin-left: 1px;
}

.view-box {
  width: 61px;
  height: 21px;
  border: 1px solid #555;
  background: #f8f8f8;
}

.workspace {
  flex: 1;
  min-height: 0;
  display: flex;
  margin-top: 3px;
}

.nav-panel {
  width: 253px;
  flex: none;
  display: flex;
  flex-direction: column;
  padding-bottom: 2px;
}

.nav-head {
  height: 14px;
  display: flex;
  align-items: center;
  justify-content: space-between;
  padding: 0 2px 0 0;
  border: 1px solid #c9c9c9;
  border-left: none;
  background: #f0f0f0;
  line-height: 14px;
}

.head-icons {
  display: flex;
  align-items: center;
  gap: 10px;
  margin-right: 2px;
}

.nav-btn {
  height: 20px;
  line-height: 20px;
  text-align: center;
  background: #f0f0f0;
  border: 1px solid #bdbdbd;
  flex: none;
}

.nav-btn.tall {
  height: 21px;
  line-height: 20px;
}

.expand-bar {
  height: 27px;
  display: flex;
  align-items: center;
  gap: 6px;
  padding-left: 6px;
  background: #f5f5f5;
  flex: none;
}

.tree {
  position: relative;
  flex: none;
  height: 487px;
  box-sizing: border-box;
  padding-top: 1px;
  background: #fff;
  border: 1px solid #9a9a9a;
  border-left-width: 2px;
  overflow: hidden;
  margin-bottom: 1px;
}

.tree-row {
  position: relative;
  height: 16px;
  display: flex;
  align-items: center;
  white-space: nowrap;
}

.tree-row.picked {
  background: linear-gradient(#d9d9d9, #d9d9d9) 41px 0 / 81px 100% no-repeat;
}

.chev {
  position: absolute;
  left: 7px;
  top: 4px;
}

.dots {
  display: block;
  border-top: 1px dotted #666;
  flex: none;
}

.tree-row.root {
  padding-left: 21px;
}

.tree-row.root .dots {
  width: 3px;
}

.tree-row.root .ico {
  margin-left: 1px;
}

.tree-row.root .tree-label {
  margin-left: 3px;
}

.tree-row.leaf {
  padding-left: 31px;
}

.tree-row.leaf::before {
  content: "";
  position: absolute;
  left: 31px;
  top: 0;
  bottom: 0;
  border-left: 1px dotted #666;
}

.tree-row.leaf.end::before {
  bottom: 8px;
}

.tree-row.leaf .dots {
  width: 11px;
}

.tree-label {
  margin-left: 5px;
  padding: 0 2px 0 1px;
  line-height: 16px;
}

.mono {
  font-family: "Liberation Mono", monospace;
  font-size: 10px;
}

.new-ico {
  width: 15px;
  height: 15px;
  margin-left: 1px;
  flex: none;
}

.new-badge {
  align-self: flex-start;
  font-family: "Liberation Sans", sans-serif;
  font-size: 9px;
  font-weight: 700;
  line-height: 8px;
  padding: 0 1px;
  background: #ffe100;
  color: #222;
}

.tree-scroll {
  position: absolute;
  right: 0;
  bottom: 0;
  width: 16px;
  height: 18px;
  display: flex;
  align-items: center;
  justify-content: center;
  background: #ececec;
}

.work-right {
  flex: 1;
  min-width: 0;
  display: flex;
  flex-direction: column;
}

.work-body {
  flex: 1;
  min-height: 0;
  display: flex;
  padding-left: 7px;
  padding-bottom: 4px;
}

.list-pane {
  position: relative;
  width: 183px;
  flex: none;
  display: flex;
  flex-direction: column;
  justify-content: flex-end;
  box-sizing: border-box;
  border: 1px solid #bdbdbd;
  border-bottom: none;
  background: #fff;
  padding-bottom: 2px;
}

.list-row {
  position: relative;
  height: 16px;
  display: flex;
  align-items: center;
  padding-left: 32px;
  white-space: nowrap;
}

.list-row.child {
  padding-left: 44px;
}

.list-row .dots {
  width: 9px;
}

.list-row::before {
  content: "";
  position: absolute;
  left: 32px;
  top: 0;
  bottom: 0;
  border-left: 1px dotted #666;
}

.list-row.child::before {
  left: 44px;
  bottom: 8px;
}

.list-chev {
  position: absolute;
  left: 28px;
  top: 5px;
  z-index: 1;
  background: #fff;
}

.gear {
  width: 14px;
  height: 14px;
  flex: none;
}

.mono-name {
  margin-left: 6px;
  font-family: "Liberation Mono", monospace;
  font-size: 10px;
}

.mono-name .cn {
  font-family: "Noto Sans CJK SC", sans-serif;
  font-size: 12px;
}

.list-scroll {
  position: absolute;
  right: 0;
  bottom: 0;
  width: 16px;
  height: 57px;
  display: flex;
  align-items: flex-end;
  justify-content: center;
  padding-bottom: 5px;
  box-sizing: border-box;
  background: #f0f0f0;
}

.props-pane {
  flex: 1;
  min-width: 0;
  margin-left: 6px;
  display: flex;
  flex-direction: column;
  background: #fff;
  border-right: 2px solid #d4d4d4;
}

.props-head {
  height: 20px;
  border-bottom: 2px solid #d0d0d0;
  flex: none;
}

.canvas-frame {
  flex: 1;
  margin-top: 2px;
  margin-right: 1px;
  border: 1px solid #a9a9a9;
  border-width: 1px 1px 1px 2px;
}

.statusbar {
  height: 20px;
  flex: none;
  display: flex;
  gap: 2px;
  padding-bottom: 1px;
  box-sizing: border-box;
  background: #f0f0f0;
  line-height: 18px;
}

.statusbar b {
  font-family: "Liberation Mono", monospace;
  font-size: 10px;
  font-weight: 400;
}

.cell {
  box-sizing: border-box;
  height: 19px;
  padding-left: 2px;
  border: 1px solid #dcdcdc;
  white-space: nowrap;
}

.c0 { width: 148px; }
.c1 { width: 78px; }
.c2 { width: 98px; }
.c3 { width: 48px; }
.c4 { width: 915px; }
.c5 { width: 69px; }

.taskbar {
  position: relative;
  height: 40px;
  flex: none;
  display: flex;
  align-items: center;
  background: linear-gradient(to right, #071319 1297px, #020608 1297px);
  color: #fff;
}

.start {
  width: 48px;
  height: 40px;
  display: flex;
  align-items: center;
  justify-content: center;
  background: #000;
  flex: none;
}

.search {
  width: 344px;
  height: 40px;
  flex: none;
  display: flex;
  align-items: center;
  box-sizing: border-box;
  padding-left: 10px;
  background: #333;
  color: #9b9b9b;
  font-size: 13px;
}

.cortana {
  width: 14px;
  height: 14px;
  border: 3px solid #f0f0f0;
  border-radius: 50%;
  margin-right: 6px;
}

.mic {
  margin-left: auto;
  margin-right: 15px;
}

.task-icons {
  display: flex;
  flex: none;
}

.task-btn {
  position: relative;
  height: 40px;
  display: flex;
  align-items: center;
  justify-content: center;
  flex: none;
}

.task-btn.running::after {
  content: "";
  position: absolute;
  left: 3px;
  right: 3px;
  bottom: 0;
  height: 2px;
  background: #6db4ee;
}

.task-btn.active {
  background: #2e3a40;
}

.task-btn.active::after {
  left: 0;
  right: 0;
}

.tray-link {
  margin-left: 11px;
  width: 33px;
  flex: none;
  color: #ddd;
}

.cpu {
  width: 72px;
  flex: none;
  display: flex;
  flex-direction: column;
  align-items: center;
  line-height: 17px;
}

.tray {
  margin-left: 9px;
  display: flex;
  align-items: center;
  gap: 12px;
  flex: none;
}

.kbd {
  margin-left: 16px;
}

.tray-ime {
  font-size: 13px;
}

.clock {
  margin-left: 10px;
  width: 78px;
  flex: none;
  display: flex;
  flex-direction: column;
  align-items: center;
  line-height: 19px;
  font-size: 12px;
}

.notify {
  margin-left: auto;
  width: 52px;
  height: 40px;
  display: flex;
  align-items: center;
  box-sizing: border-box;
  padding-left: 10px;
}

.dialog {
  position: absolute;
  left: 177px;
  top: 114px;
  width: 981px;
  height: 534px;
  box-sizing: border-box;
  display: flex;
  flex-direction: column;
  background: #f0f0f0;
  border: 1px solid #3d96ee;
  box-shadow: 0 4px 22px rgba(0, 0, 0, 0.38);
}

.dlg-title {
  height: 31px;
  flex: none;
  box-sizing: border-box;
  padding: 0 0 3px 8px;
  display: flex;
  align-items: center;
  background: #fff;
}

.dlg-name {
  margin-left: 4px;
  font-size: 12px;
}

.dlg-controls {
  margin-left: auto;
  display: flex;
  gap: 33px;
  padding-right: 17px;
}

.dlg-body {
  flex: 1;
  min-height: 0;
  display: flex;
}

.shapes {
  position: relative;
  width: 289px;
  flex: none;
  box-sizing: border-box;
  padding: 18px 0 0 5px;
  border-right: 1px solid #d0d0d0;
}

.shapes::before {
  content: "";
  position: absolute;
  left: 2px;
  right: 2px;
  top: 5px;
  bottom: 0;
  border: 1px solid #dcdcdc;
  border-bottom: none;
}

.shapes-legend {
  position: absolute;
  left: 7px;
  top: -2px;
  padding-right: 2px;
  line-height: 14px;
  background: #f0f0f0;
  z-index: 1;
}

.thumb-grid {
  position: relative;
  display: grid;
  grid-template-columns: 128px 128px;
  grid-auto-rows: 144px;
  gap: 4px;
  width: 260px;
  height: 446px;
  overflow: hidden;
}

.cell-thumb {
  box-sizing: border-box;
  padding: 2px;
  border: 1px solid #d4d4d4;
  border-right-color: #a9a9a9;
  border-bottom-color: #a9a9a9;
  background: #f5f5f5;
}

.cell-thumb.selected {
  padding: 0;
  border: 3px solid #00e8e8;
}

.thumb {
  display: block;
  width: 100%;
  height: 100%;
  shape-rendering: crispEdges;
}

.thumb text {
  font-family: "Noto Sans CJK SC", sans-serif;
}

.thumb .serif {
  font-family: "Liberation Serif", serif;
}

.thumb .mono-font {
  font-family: "Liberation Mono", monospace;
}

.t-white { fill: #fff; }
.t-navy { fill: #3b3d8a; fill-opacity: 0.88; }
.t-10 { font-size: 10px; }
.t-11 { font-size: 11px; }
.t-13 { font-size: 13.2px; }
.t-14 { font-size: 14px; }
.t-15 { font-size: 15px; }
.t-16 { font-size: 16px; }
.t-20 { font-size: 20px; }

.vscroll {
  position: absolute;
  right: 3px;
  top: 18px;
  bottom: 0;
  width: 16px;
  display: flex;
  flex-direction: column;
  align-items: center;
  padding-top: 3px;
  box-sizing: border-box;
}

.vthumb {
  width: 16px;
  height: 158px;
  margin-top: 4px;
  background: #cdcdcd;
}

.vdown {
  margin-top: auto;
  margin-bottom: 3px;
}

.preview {
  flex: 1;
  min-width: 0;
  display: flex;
  flex-direction: column;
  padding-left: 1px;
}

.radios {
  height: 31px;
  flex: none;
  box-sizing: border-box;
  padding: 0 0 2px 170px;
  display: flex;
  align-items: center;
  gap: 135px;
}

.radio {
  position: relative;
  padding-left: 15px;
}

.radio::before {
  content: "";
  position: absolute;
  left: 0;
  top: 3px;
  width: 11px;
  height: 11px;
  box-sizing: border-box;
  border: 1px solid #333;
  border-radius: 50%;
  background: #fff;
}

.radio.on::after {
  content: "";
  position: absolute;
  left: 3px;
  top: 6px;
  width: 5px;
  height: 5px;
  border-radius: 50%;
  background: #111;
}

.cad {
  display: block;
  width: 688px;
  height: 433px;
  flex: none;
  shape-rendering: crispEdges;
}

.cad text {
  font-family: "Noto Sans CJK SC", sans-serif;
}

.cad-green text {
  font-family: "Liberation Sans", sans-serif;
  font-size: 12px;
  fill: #00ff00;
}

.cad-green text.wide {
  font-size: 13px;
}

.cad-white text {
  font-size: 14px;
  fill: #fff;
}

.cad .cad-big {
  font-family: "Liberation Serif", serif;
  font-size: 36px;
  fill: #fff;
}

.cad .cad-big.small {
  font-size: 32px;
}

.cad-title {
  font-size: 31px;
  letter-spacing: 1.5px;
  fill: #fff;
  font-weight: 300;
}

.dlg-foot {
  position: relative;
  height: 37px;
  flex: none;
  border-top: 1px solid #a0a0a0;
  background: #f0f0f0;
  display: flex;
  align-items: flex-start;
  padding-top: 7px;
  padding-left: 336px;
  box-sizing: border-box;
}

.btn {
  height: 25px;
  width: 90px;
  padding: 0;
  border: 1px solid #adadad;
  background: #e1e1e1;
  font: inherit;
  color: #111;
}

.btn.ok {
  margin-left: 334px;
}

.btn.cancel {
  margin-left: 14px;
}

.marker {
  position: absolute;
  left: 292px;
  top: 130px;
}

.score {
  position: absolute;
  left: 1130px;
  top: -25px;
  width: 44px;
  height: 44px;
  box-sizing: border-box;
  padding-bottom: 3px;
  display: flex;
  align-items: flex-end;
  justify-content: center;
  border-radius: 50%;
  background: #33b24b;
  border: 2px solid #e5f3e5;
  box-shadow: 0 1px 3px 1px #8a8a8a;
  color: #fff;
  font-size: 11px;
  font-weight: 700;
  line-height: 14px;
}

.net-widget {
  position: absolute;
  left: 708px;
  top: 22px;
  width: 120px;
  height: 48px;
  box-sizing: border-box;
  display: flex;
  align-items: center;
  gap: 6px;
  padding-left: 7px;
  border-radius: 24px;
  background: #fff;
  box-shadow: 0 1px 5px rgba(0, 0, 0, 0.25);
}

.net-side {
  display: flex;
  flex-direction: column;
  gap: 6px;
}

.net-count {
  display: flex;
  align-items: center;
  gap: 6px;
  color: #666;
  font-size: 10px;
  line-height: 12px;
}

.ime-bar {
  position: absolute;
  left: 790px;
  top: 17px;
  width: 186px;
  height: 23px;
  box-sizing: border-box;
  display: flex;
  align-items: center;
  gap: 7px;
  padding-left: 12px;
  border: 1px solid #bcd0e0;
  background: #fff;
}

.ime-zh {
  color: #1e73c4;
  font-size: 13px;
  font-weight: 700;
}

.ime-dot {
  width: 14px;
  color: #1e73c4;
  font-size: 12px;
  font-weight: 700;
}

.sogou {
  position: absolute;
  left: 775px;
  top: 14px;
  transform: rotate(-3deg);
}
</style>
